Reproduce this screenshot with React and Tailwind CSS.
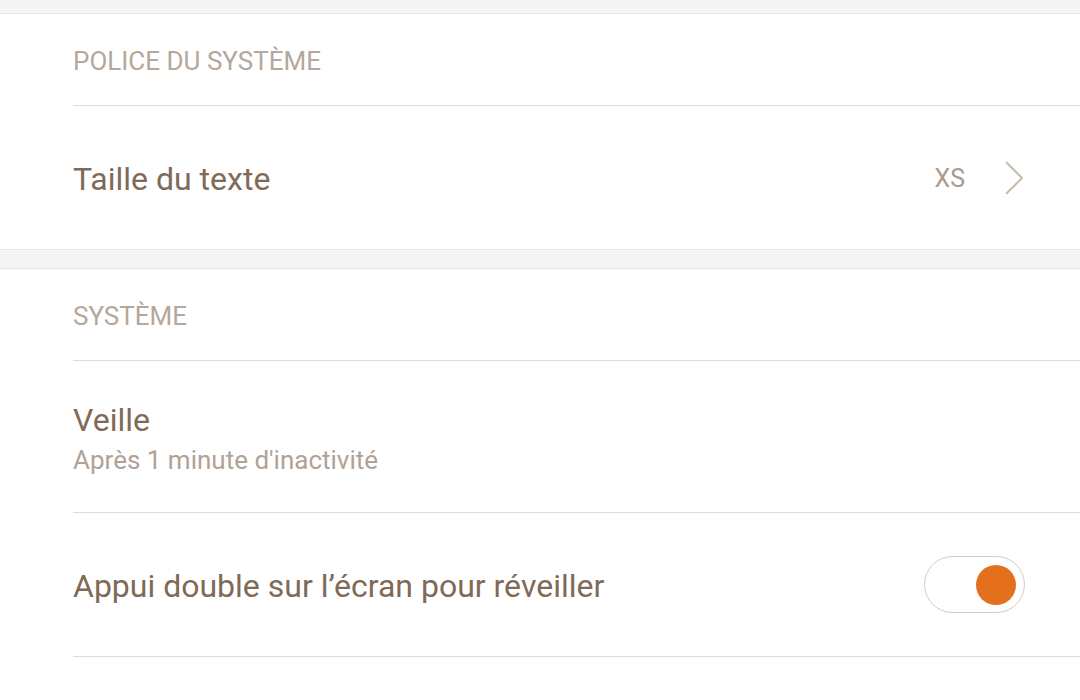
import React, { useState } from 'react';

const font = { fontFamily: 'Roboto, "Noto Sans", sans-serif' };

const SectionHeader = ({ label }) => (
  <div className="h-[91px] flex items-center pl-[73px] pt-[4px]">
    <span className="text-[26px] text-[#b5a79b]">{label}</span>
  </div>
);

const Divider = () => <div className="ml-[73px] h-px bg-[#dcdcdc]" />;

const Chevron = () => (
  <svg width="22" height="36" viewBox="0 0 22 36" fill="none" className="ml-[38px]">
    <path d="M3 2 L19 18 L3 34" stroke="#c7bbb0" strokeWidth="2" strokeLinejoin="miter" />
  </svg>
);

const Toggle = ({ on, onChange }) => (
  <button
    onClick={() => onChange(!on)}
    className={`w-[101px] h-[57px] rounded-full border border-[#d6cbc1] bg-white flex items-center px-[8px] ${on ? 'justify-end' : 'justify-start'}`}
  >
    <span className="w-[40px] h-[40px] rounded-full bg-[#e4701d]" />
  </button>
);

export default function App() {
  const [doubleTap, setDoubleTap] = useState(true);

  return (
    <div className="w-[1080px] h-[700px] bg-white overflow-hidden" style={font}>
      {/* top gap */}
      <div className="h-[14px] bg-[#f5f5f5] border-b border-[#e6e6e6]" />

      {/* Police du système */}
      <SectionHeader label="POLICE DU SYSTÈME" />
      <Divider />
      <div className="h-[143px] flex items-center pl-[73px] pr-[55px]">
        <span className="flex-1 text-[32px] text-[#7f6a58] pt-[2px]">Taille du texte</span>
        <span className="text-[25px] text-[#a99b8f] pt-[2px]">XS</span>
        <Chevron />
      </div>

      {/* gap */}
      <div className="h-[20px] bg-[#f5f5f5] border-y border-[#e6e6e6]" />

      {/* Système */}
      <SectionHeader label="SYSTÈME" />
      <Divider />
      <div className="h-[151px] flex flex-col justify-center pl-[73px] pr-[55px] pt-[5px]">
        <span className="text-[32px] leading-[40px] text-[#7f6a58]">Veille</span>
        <span className="text-[26px] leading-[36px] text-[#b0a296] mt-[2px]">Après 1 minute d'inactivité</span>
      </div>
      <Divider />
      <div className="h-[143px] flex items-center pl-[73px] pr-[55px]">
        <span className="flex-1 text-[32px] text-[#7f6a58] pt-[2px]">Appui double sur l’écran pour réveiller</span>
        <Toggle on={doubleTap} onChange={setDoubleTap} />
      </div>
      <Divider />
    </div>
  );
}
